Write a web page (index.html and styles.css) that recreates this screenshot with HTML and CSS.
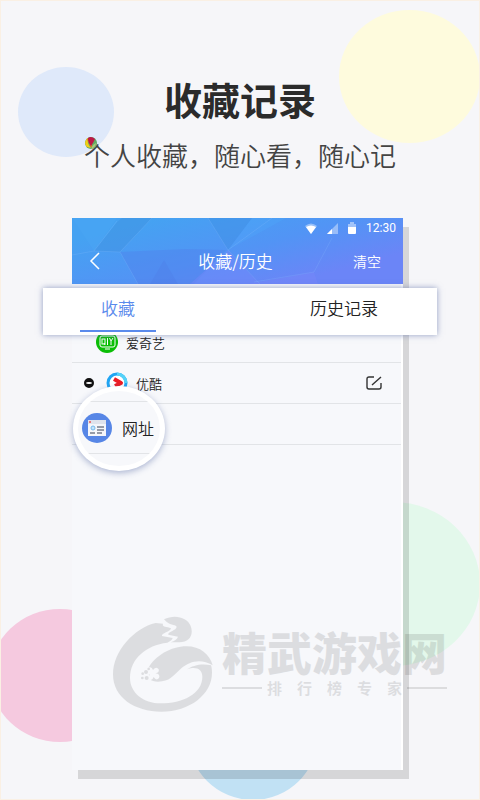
FILE: index.html
```html
<!DOCTYPE html>
<html lang="zh-CN">
<head>
    <meta charset="UTF-8">
    <meta name="viewport" content="width=device-width, initial-scale=1.0">
    <title>收藏记录</title>
    <link rel="stylesheet" href="styles.css">
</head>
<body>
<main class="page">
    <div class="circle circle-blue"></div>
    <div class="circle circle-yellow"></div>
    <div class="circle circle-pink"></div>
    <div class="circle circle-green"></div>
    <div class="circle circle-sky"></div>

    <header class="intro">
        <h1>收藏记录</h1>
        <p class="slogan">
            <svg class="balloon" viewBox="0 0 12 12" aria-hidden="true">
                <circle cx="6" cy="6" r="6" fill="#62a862"/>
                <path d="M3 1C0 3-1 7 2 10l4 1C3 8 2 4 3 1z" fill="#f3cf16"/>
                <path d="M2 2l4 8 2 1-4-10z" fill="#e87422"/>
                <path d="M3 1c2-2 5-1 7 1L8 6 6 9C4 7 3 4 3 1z" fill="#bd1746"/>
                <path d="M8 8l3-2c0 3-2 5-5 6z" fill="#a7c879"/>
            </svg>
            个人收藏，随心看，随心记
        </p>
    </header>

    <section class="phone">
        <div class="topbar">
            <svg class="facets" viewBox="0 0 331 66" preserveAspectRatio="none" aria-hidden="true">
                <path d="M0 0h45L22 33z" fill="#49a6f4" opacity=".5"/>
                <path d="M45 4L22 33l26 1L80 0H50z" fill="#3f8fdc" opacity=".4"/>
                <path d="M92 42l14 24H78z" fill="#4d7ce4" opacity=".35"/>
                <path d="M48 34l18 32h56l32-34-40-1z" fill="#4f80ea" opacity=".4"/>
                <path d="M136 0h44l-24 32z" fill="#3d8ee0" opacity=".4"/>
                <path d="M156 32l-38 34h70z" fill="#7187fa" opacity=".5"/>
                <path d="M180 0h34l-58 32z" fill="#52b2ff" opacity=".2"/>
                <path d="M242 54l-66 12h70z" fill="#7b86fb" opacity=".4"/>
                <path d="M22 33L45 3M22 33l26 1 32-34M22 33l-22 4M48 34l18 32M156 32l-20-32M156 32l32 34M156 32l44-32M242 54l18-34M242 54l-60 10" fill="none" stroke="#8fc5ff" opacity=".2"/>
            </svg>
            <div class="status">
                <svg width="12" height="11" viewBox="0 0 12 11" aria-hidden="true">
                    <path d="M0 3q6-5 12 0L6 11z" fill="#fff" opacity=".4"/>
                    <path d="M1 4q5-3 10 0l-5 7z" fill="#fff"/>
                </svg>
                <svg width="11" height="11" viewBox="0 0 11 11" aria-hidden="true">
                    <path d="M11 0v11H0z" fill="#fff" opacity=".4"/>
                    <path d="M5 6v5H0z" fill="#fff"/>
                </svg>
                <svg width="8" height="12" viewBox="0 0 8 12" aria-hidden="true">
                    <path d="M0 2h2V0h4v2h2v3H0z" fill="#fff" opacity=".45"/>
                    <path d="M0 5h8v6q0 1-1 1H1q-1 0-1-1z" fill="#fff"/>
                </svg>
                <span>12:30</span>
            </div>
            <nav class="navbar">
                <button type="button" class="back" aria-label="返回">
                    <svg width="10" height="18" viewBox="0 0 10 18" aria-hidden="true">
                        <path d="M9 1L1 9l8 8" fill="none" stroke="#fff" stroke-width="1.5"/>
                    </svg>
                </button>
                <h2>收藏/历史</h2>
                <button type="button" class="clear">清空</button>
            </nav>
        </div>

        <div class="tabs">
            <button type="button" class="tab active">收藏</button>
            <button type="button" class="tab">历史记录</button>
        </div>

        <ul class="list">
            <li class="row row-indent">
                <svg class="logo" viewBox="0 0 22 22" aria-hidden="true">
                    <circle cx="11" cy="11" r="11" fill="#0bbe06"/>
                    <rect x="4" y="5" width="15" height="11" rx="2" fill="none" stroke="#fff"/>
                    <rect x="6" y="8" width="3" height="5" fill="none" stroke="#fff"/>
                    <path d="M8 12l1 2M11.500 7v7M13.500 7l1.500 3 2-3M15 10v4M9 18h5" fill="none" stroke="#fff"/>
                </svg>
                <span>爱奇艺</span>
            </li>
            <li class="row">
                <button type="button" class="remove" aria-label="删除"></button>
                <svg class="logo" viewBox="0 0 22 22" aria-hidden="true">
                    <circle cx="11" cy="11" r="9" fill="#fff" stroke="#20a5f3" stroke-width="3"/>
                    <path d="M11 2a9 9 0 0 1 9 9" fill="none" stroke="#54d2f8" stroke-width="3"/>
                    <path d="M8 7l7 4-6 3" fill="none" stroke="#ed1c24" stroke-width="4" stroke-linejoin="round"/>
                </svg>
                <span>优酷</span>
                <button type="button" class="edit" aria-label="编辑">
                    <svg width="16" height="14" viewBox="0 0 16 14" aria-hidden="true">
                        <path d="M8 1H3Q1 1 1 3v8q0 2 2 2h10q2 0 2-2V7M6 9l9-8" fill="none" stroke="#333" stroke-width="1.400"/>
                    </svg>
                </button>
            </li>
            <li class="row">
                <div class="lens">
                    <div class="lens-row">
                        <svg class="lens-logo" viewBox="0 0 30 30" aria-hidden="true">
                            <circle cx="15" cy="15" r="15" fill="#5786e6"/>
                            <rect x="6" y="7" width="18" height="16" fill="#f5f6fa"/>
                            <path d="M6 7h18v4H6z" fill="#dfe3ec"/>
                            <circle cx="8" cy="9" r="1" fill="#e55"/>
                            <circle cx="11" cy="15" r="2" fill="#c5e4fa" stroke="#75b9ed"/>
                            <path d="M15 14h7M15 17h7M8 20h5M15 20h5" stroke="#777e8c" stroke-width="1.500"/>
                        </svg>
                        <span>网址</span>
                    </div>
                </div>
            </li>
        </ul>
    </section>

    <div class="watermark">
        <svg class="dragon" viewBox="0 0 330 315" aria-hidden="true">
            <path d="M143 36C80 50 15 120 15 190c0 70 65 112 145 112 85 0 152-52 152-117 0-9-1-16-3-22-26-7-56 0-72 12 28-10 46 0 46 22 0 52-60 80-125 80-52 0-92-32-92-77 0-56 48-98 112-105q14-6 16-14l-32-6c-3-9 26-12 27-23-12-7-28-2-24-14z"/>
            <path d="M168 25c32-16 70-6 80 20 10 27-4 49-34 49h-26q18-6 22-17l-29-6c-2-10 24-12 25-24-6-9-20 0-38-22z"/>
            <path d="M120 174c20-40 70-68 115-68 42 0 70 24 79 57-34-21-69-13-94 9-25 23-35 40-70 40-10 0-20-2-25-7z"/>
            <path d="M121 170q10-5 14 7 10-12 17-2 3 10-10 12 16 2 11 14-8 10-16-3-5 14-15 6-4-8 4-13-14-1-12-11z" fill="#fff"/>
            <circle cx="114" cy="183" r="6"/>
            <circle cx="104" cy="188" r="4"/>
            <circle cx="103" cy="201" r="4"/>
            <circle cx="116" cy="201" r="6"/>
            <circle cx="122" cy="174" r="4"/>
        </svg>
        <div class="brand">
            <p class="brand-name">精武游戏网</p>
            <p class="brand-sub">排　行　榜　专　家</p>
        </div>
    </div>
</main>
</body>
</html>
```

FILE: styles.css
```css
* {
  box-sizing: border-box;
}

body {
  margin: 0;
  font-family: "Noto Sans CJK SC", sans-serif;
  font-weight: 350;
  color: #222;
  background-color: #f6f6f9;
}

h1,
h2,
p,
ul {
  margin: 0;
  padding: 0;
}

button {
  padding: 0;
  border: none;
  background: none;
  font-family: inherit;
  font-weight: inherit;
  color: inherit;
  cursor: pointer;
}

svg {
  display: block;
  flex: none;
  overflow: visible;
}

.page {
  position: relative;
  display: flex;
  flex-direction: column;
  min-height: 100vh;
  padding: 70px 76px 29px 71px;
  border: 1px solid #faf0e4;
  overflow: hidden;
}

/* background circles */
.circle {
  position: absolute;
  border-radius: 50%;
}

.circle-blue {
  left: 17px;
  top: 66px;
  width: 96px;
  height: 90px;
  background-color: #dfe9fa;
}

.circle-yellow {
  right: -1px;
  top: 9px;
  width: 141px;
  height: 133px;
  background-color: #fefbdd;
}

.circle-pink {
  left: -11px;
  bottom: 57px;
  width: 140px;
  height: 133px;
  background-color: #f5c9df;
}

.circle-green {
  right: -1px;
  bottom: 133px;
  width: 174px;
  height: 164px;
  background-color: #e3f8eb;
}

.circle-sky {
  left: 187px;
  bottom: -1px;
  width: 130px;
  height: 130px;
  background-color: #c1e1f4;
}

.intro {
  position: relative;
  margin: 0 -66px 0 -61px;
  text-align: center;
}

.intro h1 {
  font-size: 38px;
  line-height: 56px;
  font-weight: 700;
  color: #2b2b2b;
}

.slogan {
  position: relative;
  width: 312px;
  margin: 8px auto 0;
  font-size: 26px;
  line-height: 40px;
  color: #444;
  white-space: nowrap;
}

.balloon {
  position: absolute;
  left: 1px;
  top: 2px;
  width: 12px;
  height: 12px;
}

/* phone */
.phone {
  position: relative;
  flex: 1;
  margin-top: 43px;
  border-right: 2px solid #fff;
  background-color: #f7f8fb;
  box-shadow: 6px 9px 0 rgba(0, 0, 0, 0.13);
}

.topbar {
  position: relative;
  margin-right: -2px;
  color: #fff;
  background: linear-gradient(165deg, #45a2f2 15%, #5294f5 50%, #6b85f7 80%);
}

.facets {
  position: absolute;
  width: 100%;
  height: 100%;
  overflow: hidden;
}

.status {
  position: relative;
  display: flex;
  justify-content: flex-end;
  align-items: center;
  gap: 10px;
  height: 20px;
  padding-right: 7px;
  font-family: Roboto, sans-serif;
  font-size: 12px;
  font-weight: 400;
}

.navbar {
  position: relative;
  display: grid;
  grid-template-columns: 1fr auto 1fr;
  align-items: center;
  height: 46px;
  padding: 0 22px 0 18px;
}

.navbar h2 {
  font-size: 17px;
  line-height: 24px;
  font-weight: inherit;
}

.clear {
  justify-self: end;
  font-size: 14px;
}

.tabs {
  position: relative;
  z-index: 1;
  display: flex;
  justify-content: space-between;
  height: 47px;
  margin: 4px -36px -13px -29px;
  padding: 0 59px 0 37px;
  background-color: #fff;
  box-shadow: 0 0 6px rgba(80, 100, 160, 0.6);
}

.tab {
  height: 44px;
  padding-bottom: 4px;
  font-size: 17px;
  border-bottom: 2px solid transparent;
}

.tab.active {
  width: 76px;
  color: #5a8aec;
  border-bottom-color: #5a8aec;
}

.list {
  list-style: none;
}

.row {
  position: relative;
  display: flex;
  align-items: center;
  gap: 8px;
  height: 41px;
  padding: 0 19px 0 12px;
  border-bottom: 1px solid #e2e4e7;
  font-size: 13px;
}

.row-indent {
  padding-left: 24px;
}

.logo {
  width: 22px;
  height: 22px;
}

.remove {
  width: 10px;
  height: 10px;
  margin-right: 4px;
  border: solid #111;
  border-width: 4px 2px;
  border-radius: 50%;
  background-color: #fff;
}

.edit {
  margin-left: auto;
}

/* magnified row */
.lens {
  position: absolute;
  left: 1px;
  top: -18px;
  width: 92px;
  height: 85px;
  padding-top: 10px;
  border: 5px solid #fff;
  border-radius: 50%;
  background-color: #f7f8fb;
  box-shadow: 0 2px 6px rgba(80, 100, 160, 0.45);
  overflow: hidden;
}

.lens-row {
  display: flex;
  align-items: center;
  gap: 10px;
  height: 53px;
  padding-left: 4px;
  border: solid #e2e4e7;
  border-width: 1px 0;
  font-size: 16px;
  white-space: nowrap;
}

.lens-logo {
  width: 30px;
  height: 30px;
}

/* watermark */
.watermark {
  position: absolute;
  left: 107px;
  bottom: 83px;
  display: flex;
  align-items: center;
  gap: 4px;
  color: #000;
  opacity: 0.1;
}

.dragon {
  width: 110px;
  height: 105px;
  fill: #000;
}

.brand {
  padding-bottom: 8px;
}

.brand-name {
  font-size: 45px;
  line-height: 56px;
  font-weight: 900;
}

.brand-sub {
  display: flex;
  align-items: center;
  justify-content: space-between;
  font-size: 15px;
  line-height: 16px;
  font-weight: 700;
}

.brand-sub::before,
.brand-sub::after {
  content: "";
  width: 40px;
  height: 2px;
  background-color: #000;
}
```
